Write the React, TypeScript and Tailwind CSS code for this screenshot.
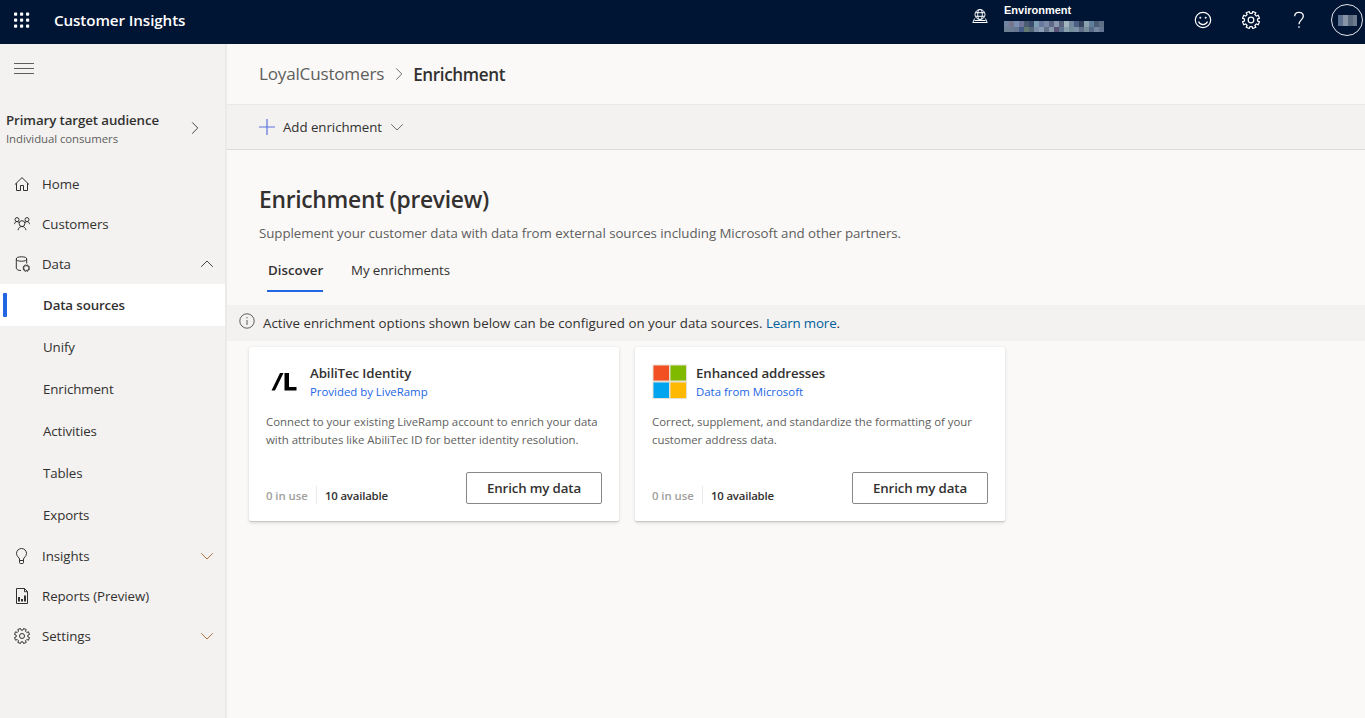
import type { ReactNode } from 'react';
import clsx from 'clsx';

function gearPath(cx: number, cy: number, outer: number, inner: number, teeth: number) {
  const step = (Math.PI * 2) / teeth;
  const points: string[] = [];
  for (let i = 0; i < teeth; i++) {
    const a = (i + 0.5) * step - Math.PI / 2;
    const corners: [number, number][] = [
      [-0.3, inner],
      [-0.24, outer],
      [0.24, outer],
      [0.3, inner],
    ];
    for (const [offset, r] of corners) {
      points.push(
        `${(cx + r * Math.cos(a + offset * step)).toFixed(2)} ${(cy + r * Math.sin(a + offset * step)).toFixed(2)}`,
      );
    }
  }
  return `M${points.join('L')}Z`;
}

function Svg({ size = 16, children, className }: { size?: number; children: ReactNode; className?: string }) {
  return (
    <svg
      width={size}
      height={size}
      viewBox="0 0 16 16"
      fill="none"
      stroke="currentColor"
      strokeWidth="1"
      className={clsx('shrink-0', className)}
    >
      {children}
    </svg>
  );
}

const GearIcon = ({ size = 16, weight = 1 }: { size?: number; weight?: number }) => (
  <Svg size={size}>
    <path d={gearPath(8, 8, 7.7, 5.9, 8)} strokeWidth={weight} />
    <circle cx="8" cy="8" r="2.5" strokeWidth={weight} />
  </Svg>
);

const HomeIcon = () => (
  <Svg>
    <path d="M.9 8.600 8 1.600l7.100 7M2.500 7.200v7.300h4v-5h3v5h4V7.200" />
  </Svg>
);

const CustomersIcon = () => (
  <Svg>
    <circle cx="8" cy="7.600" r="2.900" />
    <path d="M4 14.200c.3-2.200 1.900-3.700 4-3.700s3.700 1.500 4 3.700" />
    <circle cx="3" cy="3.600" r="2" />
    <circle cx="13" cy="3.600" r="2" />
    <path d="M.4 8.200c.2-1.500 1.200-2.600 2.600-2.600 1 0 1.900.6 2.300 1.500M15.600 8.200c-.2-1.500-1.200-2.600-2.600-2.600-1 0-1.900.6-2.300 1.500" />
  </Svg>
);

const DataIcon = () => (
  <Svg>
    <ellipse cx="7.500" cy="3" rx="5.200" ry="2.200" />
    <path d="M2.300 3v9.200c0 1.300 2 2.300 4.700 2.300M12.700 3v4.500" />
    <path d={gearPath(12.3, 12.1, 3.3, 2.3, 8)} strokeWidth="1" />
  </Svg>
);

const BulbIcon = () => (
  <Svg>
    <path d="M5.500 12.500V11c0-1.300-3-2.500-3-5.500a5 5 0 0 1 10 0c0 3-3 4.200-3 5.500v1.500M5.500 12.500v2a1 1 0 0 0 1 1h2a1 1 0 0 0 1-1v-2ZM5.500 12.500h4" />
  </Svg>
);

const ReportIcon = () => (
  <Svg>
    <path d="M2.500.5h8l3 3v12h-11ZM10.500.5v3.200h3" />
    <path d="M5 13.500V9M8 13.500v-2.500M11 13.500V7.500" strokeWidth="2" />
  </Svg>
);

const Chevron = ({ direction, className }: { direction: 'up' | 'down' | 'right'; className?: string }) => {
  const d = { up: 'M2.200 10.800 8 5l5.800 5.800', down: 'M2.200 5.300 8 11l5.800-5.700', right: 'M5.200 2.400 10.800 8l-5.600 5.600' };
  return (
    <Svg className={className}>
      <path d={d[direction]} strokeWidth=".9" />
    </Svg>
  );
};

const nameMosaic = [
  [
    '#6f84a0', '#76778f', '#7b8fb0', '#6e7799', '#4a5d72', '#3b4d6c', '#7e9fb3', '#69789c', '#7b8aa8', '#5e6a85',
    '#8899ad', '#58627f', '#a1b5bf', '#75879e', '#4b6082', '#33415f', '#8ba1ad', '#62809a', '#4b5c76', '#5c6f83',
  ],
  [
    '#6c7f93', '#6c7b94', '#677791', '#445b86', '#61796e', '#536779', '#7c8ea5', '#8a9db7', '#63738c', '#879aae',
    '#5a5276', '#5d7392', '#899fae', '#748e9c', '#7990a7', '#5e6f87', '#768a97', '#576a87', '#7487a0', '#627691',
  ],
];

function TopBar() {
  return (
    <header className="flex h-11 shrink-0 items-center bg-[#001433] text-white">
      <svg width="16" height="16" viewBox="0 0 16 16" className="ml-[14px] -mt-[5px] shrink-0" fill="currentColor">
        {[0, 6, 12].map((y) => [0, 6, 12].map((x) => <rect key={`${x}-${y}`} x={x} y={y + 0.5} width="3.200" height="3.200" rx=".9" />))}
      </svg>
      <div className="ml-6 -mt-[3px] text-[15.2px] font-semibold tracking-[-0.1px]">Customer Insights</div>
      <div className="ml-auto flex h-full">
        <Svg className="mt-2">
          <circle cx="8" cy="6.500" r="5" />
          <ellipse cx="8" cy="6.500" rx="2.300" ry="5" />
          <path d="M3.500 4.700h9M3.500 8.300h9M2.600 10.500.8 14.500h14.400l-1.800-4M2.500 12.500h11" />
        </Svg>
        <div className="ml-4 w-[188px] pt-[3px] font-['Liberation_Sans',sans-serif]">
          <div className="text-[11px] leading-[14px] font-bold">Environment</div>
          <div className="mt-1 flex h-[11px] w-[100px] flex-col">
            {nameMosaic.map((line, row) => (
              <div key={row} className="flex flex-1">
                {line.map((color, i) => (
                  <span key={i} className="w-[5px]" style={{ background: color }} />
                ))}
              </div>
            ))}
          </div>
        </div>
        <div className="flex h-10 items-center">
          <svg width="18" height="18" viewBox="0 0 18 18" fill="none" stroke="currentColor" strokeWidth="1.200" className="ml-[2px]">
            <circle cx="9" cy="9" r="7.700" />
            <path d="M4.500 10.500c.8 2 2.500 3.100 4.500 3.100s3.700-1.100 4.500-3.100" />
            <circle cx="6.300" cy="6.700" r=".7" fill="currentColor" strokeWidth=".6" />
            <circle cx="11.700" cy="6.700" r=".7" fill="currentColor" strokeWidth=".6" />
          </svg>
          <div className="ml-[30px]">
            <GearIcon size={18} weight={1.1} />
          </div>
          <svg width="12" height="18" viewBox="0 0 12 18" fill="none" stroke="currentColor" strokeWidth="1.300" className="ml-[33px]">
            <path d="M1.700 5.200C1.700 2.800 3.500 1.300 6 1.300s4.300 1.500 4.300 3.900c0 3.500-4.300 3.900-4.300 8" />
            <circle cx="6" cy="16" r=".5" fill="currentColor" strokeWidth=".7" />
          </svg>
          <div className="mr-[2px] ml-[26px] flex h-8 w-8 items-center justify-center rounded-full border border-white/90">
            <span className="h-[11px] w-[5px] bg-[#5c7190]" />
            <span className="h-[11px] w-[5px] bg-[#8794a5]" />
            <span className="h-[11px] w-[5px] bg-[#596980]" />
            <span className="h-[11px] w-[4px] bg-[#6b7b8d]" />
          </div>
        </div>
      </div>
    </header>
  );
}

function NavItem({ icon, label, chevron }: { icon: ReactNode; label: string; chevron?: ReactNode }) {
  return (
    <div className="flex h-10 items-center pl-[14px] text-[13.3px] tracking-[-0.07px]">
      {icon}
      <span className="mt-[2px] ml-3">{label}</span>
      {chevron && <span className="mr-[10px] ml-auto">{chevron}</span>}
    </div>
  );
}

function SubItem({ label, active }: { label: string; active?: boolean }) {
  return (
    <div
      className={clsx(
        'flex h-[42px] items-center pl-[3px] text-[13.3px]',
        active ? 'bg-white font-semibold tracking-[-0.12px]' : 'tracking-[-0.1px]',
      )}
    >
      <span className={clsx('h-6 w-1 rounded-[1px]', active && 'bg-[#2266e3]')} />
      <span className="mt-[2px] ml-9">{label}</span>
    </div>
  );
}

function Sidebar() {
  return (
    <aside className="flex w-[227px] shrink-0 flex-col border-r-2 border-[#ebeae9] bg-[#f3f2f1]">
      <div className="mt-[19px] ml-[14px] flex h-[11px] w-5 flex-col justify-between">
        <span className="h-px bg-[#605e5c]" />
        <span className="h-px bg-[#605e5c]" />
        <span className="h-px bg-[#605e5c]" />
      </div>
      <div className="mt-[35px] flex h-[40px] items-center pr-[22px] pl-[6px]">
        <div>
          <div className="text-[13.3px] leading-5 font-semibold tracking-[-0.1px]">Primary target audience</div>
          <div className="text-[11.4px] leading-[18px] tracking-[-0.07px] text-[#605e5c]">Individual consumers</div>
        </div>
        <Chevron direction="right" className="mt-[-4px] ml-auto translate-y-px" />
      </div>
      <nav className="mt-[15px]">
        <NavItem icon={<HomeIcon />} label="Home" />
        <NavItem icon={<CustomersIcon />} label="Customers" />
        <NavItem icon={<DataIcon />} label="Data" chevron={<Chevron direction="up" />} />
        <SubItem label="Data sources" active />
        <SubItem label="Unify" />
        <SubItem label="Enrichment" />
        <SubItem label="Activities" />
        <SubItem label="Tables" />
        <SubItem label="Exports" />
        <NavItem icon={<BulbIcon />} label="Insights" chevron={<Chevron direction="down" className="text-[#a4642e]" />} />
        <NavItem icon={<ReportIcon />} label="Reports (Preview)" />
        <NavItem icon={<GearIcon />} label="Settings" chevron={<Chevron direction="down" className="text-[#a4642e]" />} />
      </nav>
    </aside>
  );
}

const LiveRampLogo = () => (
  <svg width="36" height="36" viewBox="0 0 36 36" className="shrink-0">
    <path d="M5.500 26.500 14 9h3.500L9 26.500ZM18.500 9H23v14h7.500v3.500h-12Z" fill="#000" />
  </svg>
);

const MicrosoftLogo = () => (
  <svg width="36" height="36" viewBox="0 0 36 36" className="shrink-0">
    <path d="M.5.5h34.500v34.500H.5z" fill="#e8e0d4" />
    <path d="M1.500 1.500h15.500v15H1.500z" fill="#f25022" />
    <path d="M18.500 1.500h15.500v15H18.500z" fill="#7fba00" />
    <path d="M1.500 18.500h15.500v15.500H1.500z" fill="#00a4ef" />
    <path d="M18.500 18.500h15.500v15.500H18.500z" fill="#ffb900" />
  </svg>
);

interface CardProps {
  logo: ReactNode;
  title: string;
  source: string;
  lines: string[];
}

function EnrichmentCard({ logo, title, source, lines }: CardProps) {
  return (
    <article className="flex h-[174px] w-[370px] flex-col rounded-[2px] bg-white px-[17px] pt-[17px] shadow-[0_1.6px_3.6px_rgba(0,0,0,0.13),0_0.3px_0.9px_rgba(0,0,0,0.11)]">
      <div className="flex h-9 items-center">
        {logo}
        <div className="ml-2">
          <div className="text-[13.3px] leading-[19px] font-semibold tracking-[-0.12px]">{title}</div>
          <div className="text-[11.4px] leading-[18px] text-[#2266e3]">{source}</div>
        </div>
      </div>
      <div className="mt-[13px] text-[11.4px] leading-[18px] tracking-[-0.015px] whitespace-nowrap text-[#605e5c]">
        {lines.map((line) => (
          <p key={line}>{line}</p>
        ))}
      </div>
      <div className="mt-[23px] flex h-8 justify-between">
        <div className="mt-[14px] flex h-[18px] items-center text-[11.4px] font-semibold tracking-[-0.18px]">
          <span className="mt-[2px] w-[50px] tracking-[-0.05px] text-[#a19f9d]">0 in use</span>
          <span className="h-[18px] w-px bg-[#edebe9]" />
          <span className="mt-[2px] ml-2">10 available</span>
        </div>
        <button className="h-8 w-[136px] rounded-[2px] border border-[#8a8886] pt-[2px] text-[13.3px] font-semibold tracking-[-0.15px]">
          Enrich my data
        </button>
      </div>
    </article>
  );
}

export default function App() {
  return (
    <div className="flex h-[718px] w-[1365px] flex-col overflow-hidden bg-[#faf9f8] font-['Open_Sans','Noto_Sans',sans-serif] text-[#323130]">
      <TopBar />
      <div className="flex min-h-0 flex-1">
        <Sidebar />
        <main className="min-w-0 flex-1">
          <div className="flex h-[60px] items-center pl-8 text-[17.1px]">
            <span className="tracking-[-0.2px] text-[#605e5c]">LoyalCustomers</span>
            <Chevron direction="right" className="ml-[7px] text-[#605e5c]" />
            <span className="mt-[2px] ml-[6px] font-semibold tracking-[-0.37px]">Enrichment</span>
          </div>
          <div className="flex h-[46px] items-center border-y border-t-[#e9e8e7] border-b-[#dddbd9] bg-[#f3f2f1] pl-8 text-[13.3px]">
            <Svg className="text-[#5b73e0]">
              <path d="M8 0v16M0 8h16" strokeWidth="1.200" />
            </Svg>
            <span className="mt-[2px] ml-2 tracking-[-0.05px]">Add enrichment</span>
            <Chevron direction="down" className="ml-[7px] text-[#605e5c]" />
          </div>
          <h1 className="mt-[34px] pl-8 text-[22.8px] leading-8 font-semibold tracking-[-0.27px]">Enrichment (preview)</h1>
          <p className="mt-[7px] pl-8 text-[13.3px] leading-5 tracking-[-0.052px] text-[#605e5c]">
            Supplement your customer data with data from external sources including Microsoft and other partners.
          </p>
          <div className="mt-[5px] flex h-[44px] pl-10 text-[13.3px] leading-[44px]">
            <div className="w-14 border-b-2 border-[#2266e3] pl-px font-semibold">Discover</div>
            <div className="ml-7 tracking-[-0.08px]">My enrichments</div>
          </div>
          <div className="mt-[13px] flex h-[36px] items-center bg-[#f3f2f1] pl-[11.5px] text-[13.3px]">
            <Svg className="-mt-[5px] text-[#605e5c]">
              <circle cx="8" cy="8" r="7.200" />
              <path d="M8 7v5M8 4v1.300" />
            </Svg>
            <span className="mt-[2px] ml-[8.5px]">
              Active enrichment options shown below can be configured on your data sources.{' '}
              <span className="tracking-[-0.15px]">
                <a className="text-[#00609a]">Learn more</a>.
              </span>
            </span>
          </div>
          <div className="mt-[6px] flex gap-4 pl-[22px]">
            <EnrichmentCard
              logo={<LiveRampLogo />}
              title="AbiliTec Identity"
              source="Provided by LiveRamp"
              lines={[
                'Connect to your existing LiveRamp account to enrich your data',
                'with attributes like AbiliTec ID for better identity resolution.',
              ]}
            />
            <EnrichmentCard
              logo={<MicrosoftLogo />}
              title="Enhanced addresses"
              source="Data from Microsoft"
              lines={['Correct, supplement, and standardize the formatting of your', 'customer address data.']}
            />
          </div>
        </main>
      </div>
    </div>
  );
}
